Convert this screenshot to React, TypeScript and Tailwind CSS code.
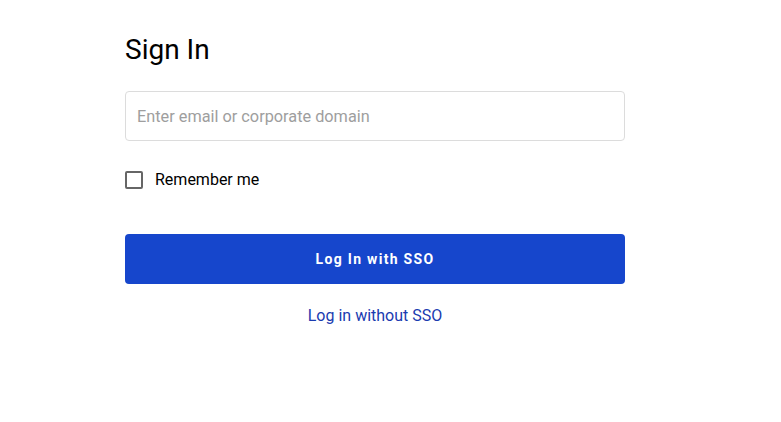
export default function App() {
  return (
    <div className="min-h-screen bg-white font-['Roboto',sans-serif]">
      <div className="ml-[125px] w-[500px] pt-[33px]">
        <h1 className="text-[28px] leading-[34px] font-normal text-black">Sign In</h1>

        <input
          type="text"
          placeholder="Enter email or corporate domain"
          className="mt-[24px] block h-[50px] w-full rounded-[4px] border border-[#dcdcdc] px-[11px] text-[16.3px] text-black outline-none placeholder:text-[#9e9e9e]"
        />

        <label className="mt-[27px] flex items-center gap-[12px]">
          <span className="h-[18px] w-[18px] rounded-[2px] border-2 border-[#666666]" />
          <span className="text-[16px] text-black">Remember me</span>
        </label>

        <button className="mt-[42px] flex h-[50px] w-full items-center justify-center rounded-[4px] bg-[#1646cc] text-[14px] font-bold tracking-[1.3px] text-white">
          Log In with SSO
        </button>

        <div className="mt-[20px] text-center">
          <a href="#" className="text-[16px] text-[#1a3bb0]">
            Log in without SSO
          </a>
        </div>
      </div>
    </div>
  );
}
